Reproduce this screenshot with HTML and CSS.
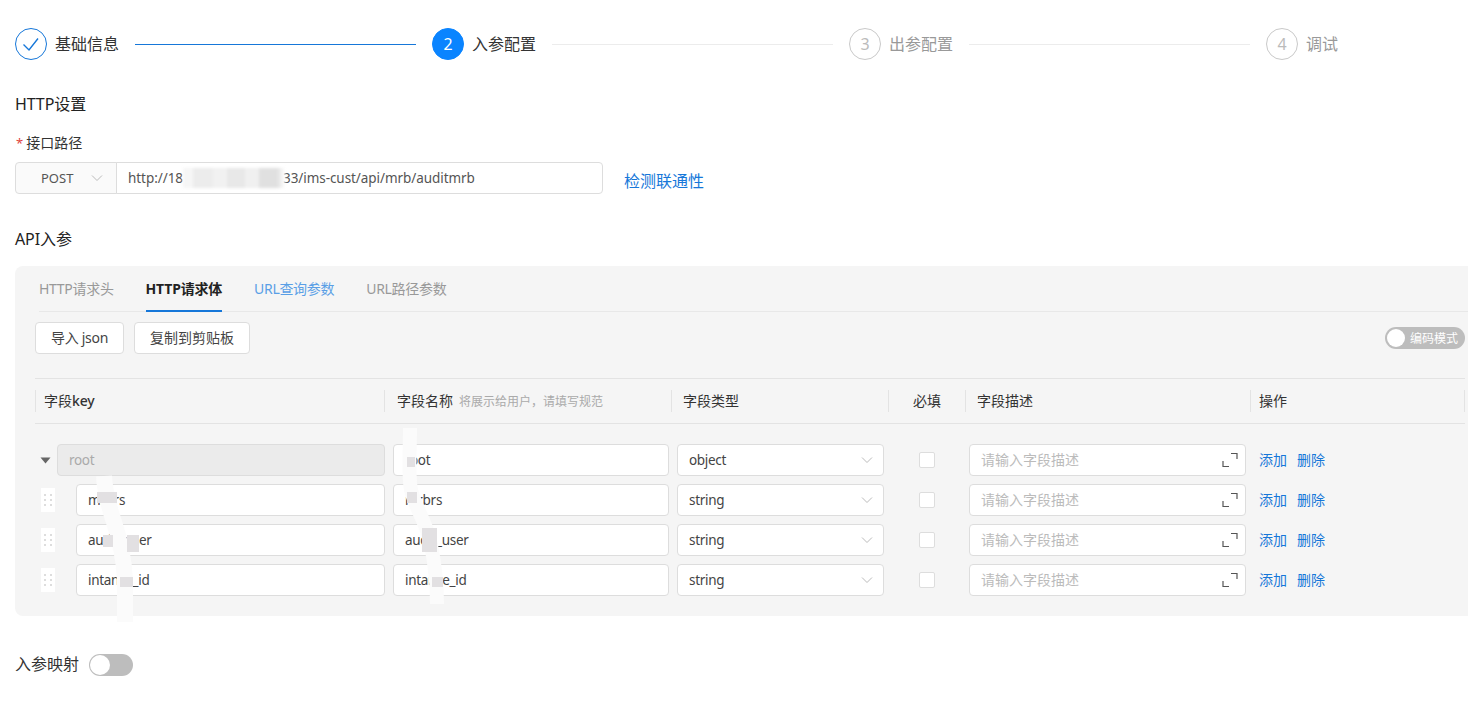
FILE: index.html
```html
<!DOCTYPE html>
<html lang="zh-CN">
<head>
<meta charset="utf-8">
<title>入参配置</title>
<link rel="stylesheet" href="styles.css">
</head>
<body>
<div class="page">
  <ol class="steps">
    <li class="step done">
      <span class="step-dot"><svg width="18" height="18" viewBox="0 0 18 18"><path d="M1.500 9.500 7 15 16 3.500" fill="none" stroke="#1677d9" stroke-width="1.400"/></svg></span>
      <span class="step-text">基础信息</span><span class="step-line"></span>
    </li>
    <li class="step active">
      <span class="step-dot">2</span>
      <span class="step-text">入参配置</span><span class="step-line"></span>
    </li>
    <li class="step">
      <span class="step-dot">3</span>
      <span class="step-text">出参配置</span><span class="step-line"></span>
    </li>
    <li class="step last">
      <span class="step-dot">4</span>
      <span class="step-text">调试</span>
    </li>
  </ol>

  <h2 class="section-title first">HTTP设置</h2>
  <label class="field-label"><span class="req">*</span>接口路径</label>
  <div class="url-row">
    <div class="method">POST
      <svg class="chev" width="12" height="12" viewBox="0 0 12 12"><path d="M1 3.500 6 8.500 11 3.500" fill="none" stroke="#bbb" stroke-width="1"/></svg>
    </div>
    <div class="url-input">http://18<span class="blur-url"></span>33/ims-cust/api/mrb/auditmrb</div>
    <a class="check-link">检测联通性</a>
  </div>

  <h2 class="section-title api">API入参</h2>
  <section class="panel">
    <div class="tabs">
      <span class="tab">HTTP请求头</span>
      <span class="tab on">HTTP请求体</span>
      <span class="tab link">URL查询参数</span>
      <span class="tab">URL路径参数</span>
    </div>
    <div class="toolbar">
      <button class="btn btn-json">导入 json</button>
      <button class="btn">复制到剪贴板</button>
      <span class="code-switch"><i class="knob"></i>编码模式</span>
    </div>
    <div class="thead">
      <div class="th key">字段<b>key</b></div>
      <div class="th name">字段名称<small>将展示给用户，请填写规范</small></div>
      <div class="th type">字段类型</div>
      <div class="th center">必填</div>
      <div class="th">字段描述</div>
      <div class="th end">操作</div>
    </div>

    <div class="row">
      <div class="c-key">
        <svg class="caret" width="12" height="8" viewBox="0 0 12 8"><path d="M0.500 1.500H10.500L5.500 7.500Z" fill="#666"/></svg>
        <div class="inp disabled">root</div>
      </div>
      <div class="c-name"><div class="inp">root</div></div>
      <div class="c-type"><div class="inp sel">object<svg width="12" height="12" viewBox="0 0 12 12"><path d="M1 3.500 6 8.500 11 3.500" fill="none" stroke="#bbb" stroke-width="1"/></svg></div></div>
      <div class="c-req"><span class="chk"></span></div>
      <div class="c-desc"><div class="inp ph"><span>请输入字段描述</span><svg width="16" height="16" viewBox="0 0 16 16"><path d="M9 1.500H15V7M1 9V14.500H7" fill="none" stroke="#555" stroke-width="1.200"/></svg></div></div>
      <div class="c-ops"><a>添加</a><a>删除</a></div>
    </div>

    <div class="row">
      <div class="c-key">
        <span class="grip"><svg width="10" height="14" viewBox="0 0 10 14"><path d="M1 1h2v2H1zM7 1h2v2H7zM1 6h2v2H1zM7 6h2v2H7zM1 11h2v2H1zM7 11h2v2H7z" fill="#ddd"/></svg></span>
        <div class="inp child">mrbrs</div>
      </div>
      <div class="c-name"><div class="inp">mrbrs</div></div>
      <div class="c-type"><div class="inp sel">string<svg width="12" height="12" viewBox="0 0 12 12"><path d="M1 3.500 6 8.500 11 3.500" fill="none" stroke="#bbb" stroke-width="1"/></svg></div></div>
      <div class="c-req"><span class="chk"></span></div>
      <div class="c-desc"><div class="inp ph"><span>请输入字段描述</span><svg width="16" height="16" viewBox="0 0 16 16"><path d="M9 1.500H15V7M1 9V14.500H7" fill="none" stroke="#555" stroke-width="1.200"/></svg></div></div>
      <div class="c-ops"><a>添加</a><a>删除</a></div>
    </div>

    <div class="row">
      <div class="c-key">
        <span class="grip"><svg width="10" height="14" viewBox="0 0 10 14"><path d="M1 1h2v2H1zM7 1h2v2H7zM1 6h2v2H1zM7 6h2v2H7zM1 11h2v2H1zM7 11h2v2H7z" fill="#ddd"/></svg></span>
        <div class="inp child">audit_user</div>
      </div>
      <div class="c-name"><div class="inp">audit_user</div></div>
      <div class="c-type"><div class="inp sel">string<svg width="12" height="12" viewBox="0 0 12 12"><path d="M1 3.500 6 8.500 11 3.500" fill="none" stroke="#bbb" stroke-width="1"/></svg></div></div>
      <div class="c-req"><span class="chk"></span></div>
      <div class="c-desc"><div class="inp ph"><span>请输入字段描述</span><svg width="16" height="16" viewBox="0 0 16 16"><path d="M9 1.500H15V7M1 9V14.500H7" fill="none" stroke="#555" stroke-width="1.200"/></svg></div></div>
      <div class="c-ops"><a>添加</a><a>删除</a></div>
    </div>

    <div class="row">
      <div class="c-key">
        <span class="grip"><svg width="10" height="14" viewBox="0 0 10 14"><path d="M1 1h2v2H1zM7 1h2v2H7zM1 6h2v2H1zM7 6h2v2H7zM1 11h2v2H1zM7 11h2v2H7z" fill="#ddd"/></svg></span>
        <div class="inp child">intance_id</div>
      </div>
      <div class="c-name"><div class="inp">intance_id</div></div>
      <div class="c-type"><div class="inp sel">string<svg width="12" height="12" viewBox="0 0 12 12"><path d="M1 3.500 6 8.500 11 3.500" fill="none" stroke="#bbb" stroke-width="1"/></svg></div></div>
      <div class="c-req"><span class="chk"></span></div>
      <div class="c-desc"><div class="inp ph"><span>请输入字段描述</span><svg width="16" height="16" viewBox="0 0 16 16"><path d="M9 1.500H15V7M1 9V14.500H7" fill="none" stroke="#555" stroke-width="1.200"/></svg></div></div>
      <div class="c-ops"><a>添加</a><a>删除</a></div>
    </div>
  </section>

  <div class="mapping">
    <span>入参映射</span>
    <span class="switch"><i class="knob"></i></span>
  </div>
</div>

<svg class="redactions" width="1468" height="708" viewBox="0 0 1468 708">
  <g fill="none" stroke="#fbfbfb" stroke-linecap="butt">
    <path stroke-width="16" d="M104 476C105 495 110 510 114 522C120 540 124 560 125 580C125 595 125 605 125 622"/>
    <path stroke-width="14" d="M410 428C410 450 408 475 411 490C416 510 428 525 431 545C435 565 437 585 437 604"/>
  </g>
  <g fill="#e2e0e2">
    <rect x="97" y="492" width="20" height="11"/>
    <rect x="103" y="535" width="10" height="12"/>
    <rect x="127" y="535" width="12" height="17"/>
    <rect x="120" y="577" width="13" height="10"/>
    <rect x="407" y="457" width="8" height="10"/>
    <rect x="407" y="492" width="10" height="11"/>
    <rect x="422" y="528" width="15" height="24"/>
    <rect x="432" y="577" width="11" height="10"/>
  </g>
</svg>
</body>
</html>
```

FILE: styles.css
```css
* { box-sizing: border-box; }
html, body { margin: 0; padding: 0; background: #fff; }
body {
  width: 1468px;
  height: 708px;
  overflow: hidden;
  position: relative;
  font-family: "Noto Sans", "Noto Sans CJK SC", sans-serif;
  font-size: 14px;
  color: #333;
}
.page { padding: 28px 0 0 15px; }

.steps { list-style: none; margin: 0; padding: 0; display: flex; height: 32px; }
.step { display: flex; align-items: center; width: 417px; color: #999; }
.step.last { width: auto; }
.step-dot {
  width: 32px; height: 32px; border-radius: 50%;
  border: 1px solid #c9c9c9; color: #bbb;
  display: flex; align-items: center; justify-content: center;
  font-size: 16px; flex: none;
}
.step-text { margin-left: 8px; font-size: 16px; line-height: 32px; white-space: nowrap; }
.step-line { flex: 1; height: 1px; background: #ececec; margin: 0 16px 0 16px; }
.step.done .step-dot { border-color: #1677d9; }
.step.done .step-text, .step.active .step-text { color: #333; }
.step.done .step-line { background: #1677d9; }
.step.active .step-dot { background: #0a84ff; border-color: #0a84ff; color: #fff; }

.section-title { margin: 0; font-size: 16px; font-weight: 400; color: #222; line-height: 20px; letter-spacing: -0.1px; }
.section-title.first { margin-top: 34px; }
.section-title.api { margin-top: 35px; }
.field-label { display: block; margin-top: 19px; line-height: 20px; font-size: 14px; color: #333; }
.req { color: #e0443e; margin-right: 3px; margin-left: 1px; font-size: 13px; }

.url-row { display: flex; align-items: center; margin-top: 9px; }
.method {
  width: 102px; height: 32px; background: #fafafa;
  border: 1px solid #ddd; border-radius: 4px 0 0 4px;
  display: flex; align-items: center; padding-left: 25px; font-size: 13px; color: #555;
}
.chev { margin-left: 18px; }
.url-input {
  width: 487px; height: 32px; margin-left: -1px;
  border: 1px solid #ddd; border-radius: 0 4px 4px 0; background: #fff;
  display: flex; align-items: center; padding-left: 11px; font-size: 13.500px; letter-spacing: -0.06px; color: #555; white-space: pre;
}
.blur-url {
  width: 102px; height: 20px; margin-right: -2px;
  background: linear-gradient(90deg, #f6f6f6 0 10px, #ececec 10px 30px, #f1f1f1 30px 44px, #e8e8e8 44px 62px, #f0f0f0 62px 76px, #e0e0e0 76px 94px, #fff 102px);
  filter: blur(1.500px);
}
.check-link { margin-left: 21px; font-size: 16px; color: #1677d9; margin-top: 3px; }

.panel {
  margin-top: 17px; height: 350px;
  background: #f5f5f5; border-radius: 8px 0 0 8px;
  padding: 0 3px 0 20px;
}
.tabs {
  display: flex; height: 46px; margin-left: 4px;
  border-bottom: 1px solid #e8e8e8;
  margin-right: -3px;
}
.tab {
  font-size: 14px; line-height: 46px; color: #999; margin-right: 32px;
  height: 46px; white-space: nowrap; letter-spacing: -0.3px;
}
.tab.on { color: #222; font-weight: 700; border-bottom: 2px solid #1677d9; letter-spacing: -0.2px; }
.tab.link { color: #5a9fe6; }

.toolbar { display: flex; align-items: center; gap: 10px; margin-top: 10px; height: 32px; }
.btn {
  height: 32px; padding: 0 15px 2px; background: #fff;
  border: 1px solid #ddd; border-radius: 4px;
  font: inherit; font-size: 14px; color: #444;
}
.btn-json { letter-spacing: -0.3px; }
.code-switch {
  margin-left: auto; width: 80px; height: 22px; border-radius: 11px;
  background: #bdbdbd; color: #fff; font-size: 12px;
  display: flex; align-items: center; padding: 0 2px; gap: 5px; white-space: nowrap;
}
.knob { display: block; width: 18px; height: 18px; border-radius: 50%; background: #fff; flex: none; }

.thead, .row {
  display: grid;
  grid-template-columns: 350px 288px 215px 77px 285px 215px;
}
.thead {
  margin-top: 24px; height: 46px;
  border-top: 1px solid #e3e3e3; border-bottom: 1px solid #e3e3e3;
  align-items: center;
}
.th {
  height: 22px; line-height: 22px; padding-left: 11px; color: #333; font-size: 14px;
  border-left: 1px solid #e3e3e3; white-space: nowrap;
}
.th.key { padding-left: 8px; }
.th.key b { font-weight: 500; letter-spacing: -0.2px; }
.th.name { padding-left: 12px; margin-left: -1px; }
.th.type { margin-left: -2px; }
.th.center { text-align: center; padding-left: 0; }
.th.end { padding-left: 8px; border-right: 1px solid #e3e3e3; }
.th small { font-size: 12px; color: #aaa; margin-left: 6px; }

.row { height: 32px; margin-bottom: 8px; }
.thead + .row { margin-top: 20px; }
.c-key { display: flex; align-items: center; }
.c-name { padding: 0 4px 0 8px; }
.c-type, .c-desc { padding: 0 4px; }
.c-req { display: flex; align-items: center; justify-content: center; }
.c-ops { display: flex; align-items: center; gap: 10px; padding: 0 0 2px 9px; font-size: 14px; color: #1677d9; }
.inp {
  height: 32px; background: #fff;
  border: 1px solid #ddd; border-radius: 4px;
  display: flex; align-items: center; justify-content: space-between;
  padding: 0 11px; font-size: 13.500px; letter-spacing: -0.3px; color: #444; flex: 1; white-space: nowrap;
}
.inp.disabled { background: #ebebeb; color: #aaa; margin-left: 5px; }
.inp.child { margin-left: 21px; }
.inp.ph { color: #bbb; padding-right: 7px; font-size: 14px; letter-spacing: 0; }
.inp.ph span { margin-top: -2px; }
.inp.sel { padding-right: 10px; }
.caret { margin-left: 5px; flex: none; }
.grip {
  width: 14px; height: 24px; background: #fff; margin-left: 6px; flex: none;
  display: flex; align-items: center; justify-content: center;
}
.chk { width: 16px; height: 16px; background: #fff; border: 1px solid #ddd; border-radius: 2px; }

.mapping { display: flex; align-items: center; gap: 10px; margin-top: 38px; font-size: 16px; color: #333; line-height: 22px; }
.mapping > span:first-child { margin-top: -2px; }
.switch { width: 44px; height: 22px; border-radius: 11px; background: #bdbdbd; padding: 1px; display: block; }
.switch .knob { width: 20px; height: 20px; }

.redactions { position: absolute; left: 0; top: 0; pointer-events: none; }
```
